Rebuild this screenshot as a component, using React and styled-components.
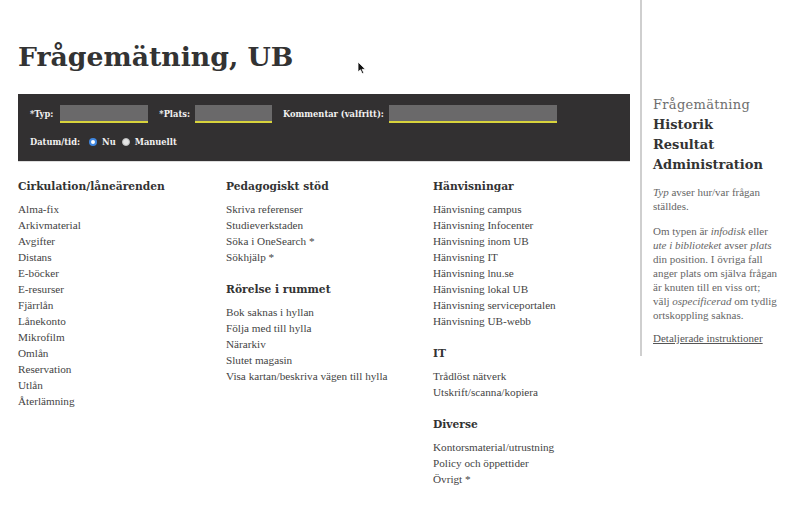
import React from 'react'
import styled, { createGlobalStyle } from 'styled-components'

const GlobalStyle = createGlobalStyle`
  html, body {
    margin: 0;
    padding: 0;
    background: #fff;
  }
  body {
    font-family: "Liberation Serif", serif;
    color: #444;
  }
`

const slab = '"DejaVu Serif", "Liberation Serif", serif'
const body = '"Liberation Serif", "DejaVu Serif", serif'

const columns = [
  [
    {
      title: 'Cirkulation/låneärenden',
      items: ['Alma-fix', 'Arkivmaterial', 'Avgifter', 'Distans', 'E-böcker', 'E-resurser', 'Fjärrlån', 'Lånekonto', 'Mikrofilm', 'Omlån', 'Reservation', 'Utlån', 'Återlämning'],
    },
  ],
  [
    {
      title: 'Pedagogiskt stöd',
      items: ['Skriva referenser', 'Studieverkstaden', 'Söka i OneSearch *', 'Sökhjälp *'],
    },
    {
      title: 'Rörelse i rummet',
      items: ['Bok saknas i hyllan', 'Följa med till hylla', 'Närarkiv', 'Slutet magasin', 'Visa kartan/beskriva vägen till hylla'],
    },
  ],
  [
    {
      title: 'Hänvisningar',
      items: ['Hänvisning campus', 'Hänvisning Infocenter', 'Hänvisning inom UB', 'Hänvisning IT', 'Hänvisning lnu.se', 'Hänvisning lokal UB', 'Hänvisning serviceportalen', 'Hänvisning UB-webb'],
    },
    { title: 'IT', items: ['Trådlöst nätverk', 'Utskrift/scanna/kopiera'] },
    { title: 'Diverse', items: ['Kontorsmaterial/utrustning', 'Policy och öppettider', 'Övrigt *'] },
  ],
]

const Cursor = () => (
  <CursorWrap>
    <svg width="10" height="14" viewBox="0 0 10 14">
      <path d="M1 1 L1 11 L3.4 8.8 L5.2 12.6 L6.8 11.9 L5.1 8.3 L8.4 8.3 Z" fill="#111" stroke="#fff" strokeWidth="0.8" strokeLinejoin="round" />
    </svg>
  </CursorWrap>
)

export default function App() {
  return (
    <Page>
      <GlobalStyle />
      <Main>
        <Title>Frågemätning, UB</Title>
        <Form>
          <FormRow>
            <Label $gap={3}>*Typ:</Label>
            <Field $w={88} />
            <Label>*Plats:</Label>
            <Field $w={77} />
            <Label>Kommentar (valfritt):</Label>
            <Field $w={168} />
          </FormRow>
          <FormRow>
            <Label $gap={3}>Datum/tid:</Label>
            <Option>
              <Radio $checked />
              Nu
            </Option>
            <Option>
              <Radio />
              Manuellt
            </Option>
          </FormRow>
        </Form>
        <Categories>
          {columns.map((groups, i) => (
            <Column key={i}>
              {groups.map((g) => (
                <Group key={g.title}>
                  <GroupTitle>{g.title}</GroupTitle>
                  {g.items.map((item) => (
                    <Item key={item}>{item}</Item>
                  ))}
                </Group>
              ))}
            </Column>
          ))}
        </Categories>
        <Cursor />
      </Main>
      <Sidebar>
        <Nav>
          <NavItem $current>Frågemätning</NavItem>
          <NavItem>Historik</NavItem>
          <NavItem>Resultat</NavItem>
          <NavItem>Administration</NavItem>
        </Nav>
        <Help>
          <Line><em>Typ</em> avser hur/var frågan</Line>
          <Line>ställdes.</Line>
        </Help>
        <Help>
          <Line>Om typen är <em>infodisk</em> eller</Line>
          <Line><em>ute i biblioteket</em> avser <em>plats</em></Line>
          <Line>din position. I övriga fall</Line>
          <Line>anger plats om själva frågan</Line>
          <Line>är knuten till en viss ort;</Line>
          <Line>välj <em>ospecificerad</em> om tydlig</Line>
          <Line>ortskoppling saknas.</Line>
        </Help>
        <HelpLink href="#">Detaljerade instruktioner</HelpLink>
      </Sidebar>
    </Page>
  )
}

const Page = styled.div`
  display: flex;
  align-items: flex-start;
  width: 800px;
`

const Main = styled.div`
  position: relative;
  width: 612px;
  padding: 38px 10px 0 18px;
`

const Title = styled.h1`
  margin: 0 0 18px;
  font-family: ${slab};
  font-weight: bold;
  font-size: 26.7px;
  line-height: 38px;
  color: #333;
`

const Form = styled.div`
  background: #323031;
  padding: 11px 12px 10px;
  display: flex;
  flex-direction: column;
  gap: 10px;
  border-bottom: 1px solid #ddd;
`

const FormRow = styled.div`
  display: flex;
  align-items: center;
  gap: 4px;
  min-height: 18px;
`

const Label = styled.span`
  font-family: ${slab};
  font-weight: bold;
  font-size: 8.3px;
  color: #f2f2f2;
  white-space: nowrap;
  margin-right: ${(p) => p.$gap ?? 1}px;
`

const Field = styled.span`
  display: block;
  width: ${(p) => p.$w}px;
  height: 16px;
  background: #6a696a;
  border-bottom: 2px solid #d8d33c;
  margin-right: 7px;
`

const Option = styled.label`
  display: flex;
  align-items: center;
  gap: 5px;
  margin-left: 2px;
  font-family: ${slab};
  font-weight: bold;
  font-size: 8.3px;
  color: #f2f2f2;
`

const Radio = styled.span`
  display: inline-block;
  box-sizing: border-box;
  width: 8px;
  height: 8px;
  border-radius: 50%;
  background: ${(p) => (p.$checked ? '#fff' : '#e4e4e4')};
  border: ${(p) => (p.$checked ? '2px solid #3f86e0' : '1px solid #bbb')};
`

const Categories = styled.div`
  display: grid;
  grid-template-columns: 208px 207px 1fr;
  margin-top: 17px;
`

const Column = styled.div`
  display: flex;
  flex-direction: column;
`

const Group = styled.div`
  margin-bottom: 17px;
`

const GroupTitle = styled.h3`
  margin: 0 0 6px;
  font-family: ${slab};
  font-weight: bold;
  font-size: 10.7px;
  line-height: 16px;
  color: #333;
`

const Item = styled.div`
  font-family: ${body};
  font-size: 11.2px;
  line-height: 16px;
  color: #444;
  white-space: nowrap;
`

const CursorWrap = styled.div`
  position: absolute;
  left: 357px;
  top: 61px;
  line-height: 0;
`

const Sidebar = styled.aside`
  border-left: 2px solid #cfcfcf;
  padding: 95px 10px 11px 11px;
  width: 137px;
`

const Nav = styled.nav`
  display: flex;
  flex-direction: column;
  margin-bottom: 10px;
`

const NavItem = styled.a`
  font-family: ${slab};
  font-weight: ${(p) => (p.$current ? 'normal' : 'bold')};
  font-size: 13px;
  line-height: 20px;
  color: ${(p) => (p.$current ? '#6e6e6e' : '#333')};
  text-decoration: none;
  white-space: nowrap;
  letter-spacing: ${(p) => (p.$current ? '0.3px' : '0')};
`

const Help = styled.div`
  margin: 0 0 11px;
  font-family: ${body};
  font-size: 11px;
  line-height: 14px;
  color: #666;

  em {
    font-style: italic;
  }
`

const Line = styled.div`
  white-space: nowrap;
`

const HelpLink = styled.a`
  display: block;
  margin-top: -2px;
  font-family: ${body};
  font-size: 11px;
  line-height: 14px;
  color: #555;
  text-decoration: underline;
`
